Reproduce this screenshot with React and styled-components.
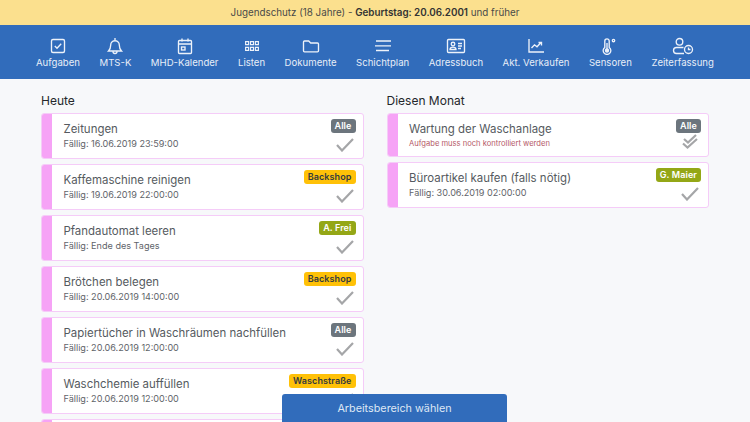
import React from 'react';
import styled, { createGlobalStyle } from 'styled-components';

const GlobalStyle = createGlobalStyle`
	html, body {
		margin: 0;
		height: 100%;
		overflow: hidden;
		background: #f7f8fa;
		font-family: Inter, "Liberation Sans", sans-serif;
	}
	* { box-sizing: border-box; }
`;

const Page = styled.div`
	position: relative;
	width: 750px;
	height: 422px;
	overflow: hidden;
	background: #f7f8fa;
`;

const Notice = styled.div`
	height: 25px;
	background: #fbe08e;
	color: #4a4a48;
	font-size: 9.8px;
	display: flex;
	align-items: center;
	justify-content: center;
	white-space: pre;
	b { font-weight: 600; color: #333; }
`;

const Nav = styled.nav`
	height: 54px;
	background: #316cbb;
	display: flex;
	justify-content: space-between;
	padding: 12px 36px 0;
`;

const NavItem = styled.div`
	display: flex;
	flex-direction: column;
	align-items: center;
	color: #e8eef8;
	font-size: 9.6px;
	line-height: 13px;
	svg { display: block; height: 18px; width: 24px; margin-bottom: 1px; }
`;

const Columns = styled.main`
	display: flex;
	gap: 23px;
	padding: 14px 41px 0;
`;

const Column = styled.section`
	width: 323px;
	display: flex;
	flex-direction: column;
	gap: 5px;
`;

const Heading = styled.h2`
	margin: 0 0 -1px;
	font-size: 12px;
	line-height: 16px;
	font-weight: 400;
	color: #24272b;
`;

const Card = styled.div`
	height: ${props => props.$short ? '44px' : '46px'};
	flex: none;
	display: flex;
	background: #fff;
	border: 1px solid #f5ccf8;
	border-radius: 3px;
	overflow: hidden;
`;

const Stripe = styled.div`
	width: 10px;
	background: #f6a3f6;
`;

const Body = styled.div`
	flex: 1;
	padding: 7px 0 0 11.5px;
`;

const Title = styled.div`
	font-size: 11.45px;
	line-height: 16px;
	color: #555a60;
`;

const Due = styled.div`
	font-size: 9.1px;
	line-height: 13px;
	color: #5f646a;
`;

const Alert = styled.div`
	font-size: 7.6px;
	line-height: 11px;
	margin-top: 1px;
	color: #b55a68;
`;

const Side = styled.div`
	display: flex;
	flex-direction: column;
	align-items: flex-end;
	padding: 5px 7px 0 0;
`;

const Badge = styled.span`
	font-size: 9px;
	line-height: 14px;
	font-weight: 600;
	letter-spacing: 0.1px;
	padding: 0 4px;
	border-radius: 3px;
	background: ${props => props.$bg};
	color: ${props => props.$fg};
`;

const Check = styled.svg`
	width: 18px;
	height: 15px;
	margin: ${props => props.$double ? '1px' : '4px'} 2px 0 0;
	fill: none;
	stroke: #a5a6a8;
	stroke-width: 2.2;
`;

const SelectButton = styled.button`
	position: absolute;
	left: 282px;
	bottom: 0;
	width: 225px;
	height: 28px;
	border: none;
	border-radius: 3px 3px 0 0;
	background: #316cbb;
	color: #dfe8f5;
	font: 10.8px Inter, "Liberation Sans", sans-serif;
`;

const stroke = { fill: 'none', stroke: '#edf2fa', strokeWidth: 1.35, viewBox: '0 0 24 18' };

const icons = {
	Aufgaben: <svg {...stroke}><rect x="5.5" y="2.500" width="13" height="13" rx="1.500" /><path d="M8.800 9l2.200 2.200 4.200-4.400" /></svg>,
	'MTS-K': <svg {...stroke}><path d="M5.500 14h13c-1.500-1.500-2.200-3-2.200-6a4.300 4.300 0 0 0-8.600 0c0 3-.7 4.500-2.200 6zM10 14.500a2 2 0 0 0 4 0M12 1v2.500" /></svg>,
	'MHD-Kalender': <svg {...stroke}><rect x="5.500" y="3.500" width="13" height="13" rx="1" /><path d="M5.500 7h13M9 1.500v3M15 1.500v3" /><rect x="8.500" y="10" width="3.500" height="3" /></svg>,
	Listen: <svg {...stroke} strokeWidth="1.150"><path d="M5.600 4.600h3v3h-3zM10.500 4.600h3v3h-3zM15.400 4.600h3v3h-3zM5.600 10.400h3v3h-3zM10.500 10.400h3v3h-3zM15.400 10.400h3v3h-3z" /></svg>,
	Dokumente: <svg {...stroke}><path d="M4.500 13.800V5a1 1 0 0 1 1-1h4.200l2 2h6.800a1 1 0 0 1 1 1v6.800a1 1 0 0 1-1 1h-13a1 1 0 0 1-1-1z" /></svg>,
	Schichtplan: <svg {...stroke}><path d="M5 4h15M4 8.800h16M5 13.500h13" /></svg>,
	Adressbuch: <svg {...stroke}><rect x="3.500" y="2.500" width="17" height="13" rx="1" /><circle cx="9" cy="7" r="1.800" /><path d="M6 12.500c0-3.200 6-3.200 6 0zM14 6.500h4M14 9h4M14 11.500h3" /></svg>,
	'Akt. Verkaufen': <svg {...stroke}><path d="M5 2v13h15M7.500 11l3-3.200 2.500 2 3.500-3.800M14.500 5.500h3v3" /></svg>,
	Sensoren: <svg {...stroke}><path d="M6.800 4a2.200 2.200 0 0 1 4.400 0v6.500a3.800 3.800 0 1 1-4.400 0z" /><circle cx="9" cy="13.500" r="1.500" fill="#edf2fa" /><path d="M9 13.500V6" /><circle cx="15.500" cy="3.500" r="1.200" /></svg>,
	Zeiterfassung: <svg {...stroke}><circle cx="8.500" cy="4.800" r="3.300" /><path d="M13 16.500H5.500a2.700 2.700 0 0 1 0-6h7" /><circle cx="17.500" cy="12.500" r="4" /><path d="M17.500 10.500v2h2" /></svg>,
};

const navItems = ['Aufgaben', 'MTS-K', 'MHD-Kalender', 'Listen', 'Dokumente', 'Schichtplan', 'Adressbuch', 'Akt. Verkaufen', 'Sensoren', 'Zeiterfassung'];

const gray = { $bg: '#6c757d', $fg: '#fff' };
const yellow = { $bg: '#ffc107', $fg: '#343a40' };
const olive = { $bg: '#94a716', $fg: '#fff' };

const today = [
	{ title: 'Zeitungen', due: 'Fällig: 16.06.2019 23:59:00', badge: 'Alle', color: gray },
	{ title: 'Kaffemaschine reinigen', due: 'Fällig: 19.06.2019 22:00:00', badge: 'Backshop', color: yellow },
	{ title: 'Pfandautomat leeren', due: 'Fällig: Ende des Tages', badge: 'A. Frei', color: olive },
	{ title: 'Brötchen belegen', due: 'Fällig: 20.06.2019 14:00:00', badge: 'Backshop', color: yellow },
	{ title: 'Papiertücher in Waschräumen nachfüllen', due: 'Fällig: 20.06.2019 12:00:00', badge: 'Alle', color: gray },
	{ title: 'Waschchemie auffüllen', due: 'Fällig: 20.06.2019 12:00:00', badge: 'Waschstraße', color: yellow },
];

const month = [
	{ title: 'Wartung der Waschanlage', alert: 'Aufgabe muss noch kontrolliert werden', badge: 'Alle', color: gray, double: true },
	{ title: 'Büroartikel kaufen (falls nötig)', due: 'Fällig: 30.06.2019 02:00:00', badge: 'G. Maier', color: olive },
];

const Task = ({ task }) => (
	<Card $short={task.double}>
		<Stripe />
		<Body>
			<Title>{task.title}</Title>
			{task.alert ? <Alert>{task.alert}</Alert> : <Due>{task.due}</Due>}
		</Body>
		<Side>
			<Badge {...task.color}>{task.badge}</Badge>
			<Check viewBox="0 0 18 15" $double={task.double}>
				{task.double
					? <><path d="M3 5l4 3.500L15 1" /><path d="M2 9.500l4.500 4L16 5" /></>
					: <path d="M1 8l5 5.500L17 2" />}
			</Check>
		</Side>
	</Card>
);

const App = () => (
	<Page>
		<GlobalStyle />
		<Notice>Jugendschutz (18 Jahre) - <b>Geburtstag: 20.06.2001</b> und früher</Notice>
		<Nav>
			{navItems.map(name => (
				<NavItem key={name}>{icons[name]}{name}</NavItem>
			))}
		</Nav>
		<Columns>
			<Column>
				<Heading>Heute</Heading>
				{today.map(task => <Task key={task.title} task={task} />)}
				<Card><Stripe /></Card>
			</Column>
			<Column>
				<Heading>Diesen Monat</Heading>
				{month.map(task => <Task key={task.title} task={task} />)}
			</Column>
		</Columns>
		<SelectButton>Arbeitsbereich wählen</SelectButton>
	</Page>
);

export default App;
